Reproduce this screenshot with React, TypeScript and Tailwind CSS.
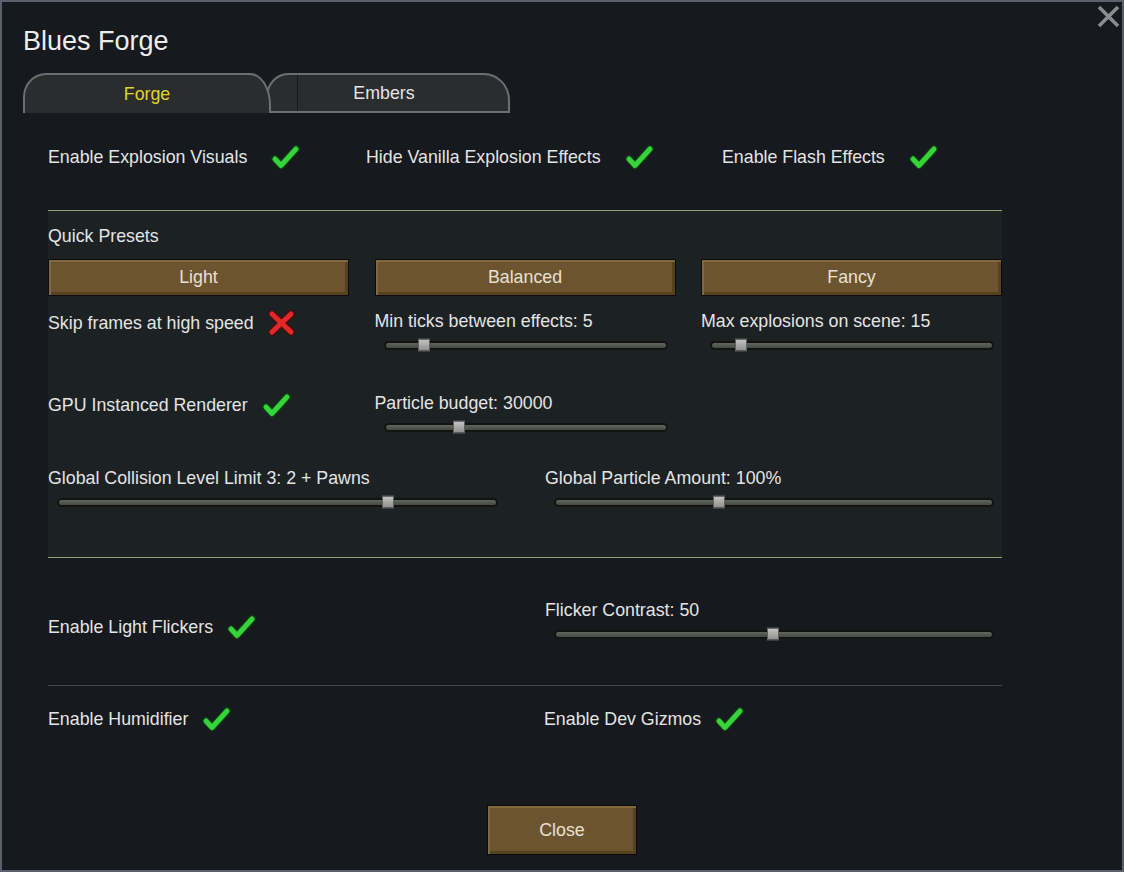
import React from "react";

// Green check mark used for enabled toggles
function CheckMark() {
  return (
    <svg width="29" height="25" viewBox="0 0 29 25" className="shrink-0">
      <path d="M4 14 L10 20.5 L25 4" fill="none" stroke="#0f3f12" strokeWidth="7.4" strokeLinecap="round" strokeLinejoin="round" />
      <path d="M4 14 L10 20.5 L25 4" fill="none" stroke="#35d43a" strokeWidth="5" strokeLinecap="round" strokeLinejoin="round" />
    </svg>
  );
}

// Red cross used for disabled toggles
function CrossMark() {
  return (
    <svg width="27" height="26" viewBox="0 0 27 26" className="shrink-0">
      <path d="M4 4 L23 22 M23 4 L4 22" fill="none" stroke="#4a0d0d" strokeWidth="7.4" strokeLinecap="round" />
      <path d="M4 4 L23 22 M23 4 L4 22" fill="none" stroke="#e4282a" strokeWidth="5" strokeLinecap="round" />
    </svg>
  );
}

function Toggle({ label, on, gap = "gap-[14px]" }: { label: string; on: boolean; gap?: string }) {
  return (
    <div className={`flex items-center h-[28px] ${gap}`}>
      <span className="leading-6 whitespace-nowrap">{label}</span>
      {on ? <CheckMark /> : <CrossMark />}
    </div>
  );
}

function Slider({ label, pct }: { label: string; pct: number }) {
  return (
    <div className="flex flex-col">
      <div className="h-6 leading-6 whitespace-nowrap">{label}</div>
      <div className="h-6 pl-[9px] pr-[8px] flex items-center">
        <div className="relative w-full h-[9px] rounded-full border-2 border-[#121412] bg-gradient-to-b from-[#63665f] to-[#464942]">
          <div
            className="absolute top-1/2 -translate-y-1/2 w-[12px] h-[13px] border border-[#5e5e5e] bg-gradient-to-b from-[#c4c4c4] to-[#8f8f8f]"
            style={{ left: `calc(${pct}% - 6px)` }}
          />
        </div>
      </div>
    </div>
  );
}

function WoodButton({ label, className = "" }: { label: string; className?: string }) {
  return (
    <div
      className={`flex items-center justify-center border border-[#0b0b0b] bg-[#6c5431] text-[#e8e1d1] shadow-[inset_2px_2px_0_#806840,inset_-3px_-3px_0_#56421f] ${className}`}
    >
      {label}
    </div>
  );
}

export default function App() {
  return (
    <div className="w-[1124px] h-[872px] overflow-hidden relative bg-[#16191e] border-2 border-[#5a616c] text-[#e4e4e4] text-[17.8px] font-['Liberation_Sans',Arial,sans-serif]">
      {/* window close */}
      <div className="absolute right-[2px] top-[3px]">
        <svg width="23" height="23" viewBox="0 0 23 23">
          <path d="M2 2 L21 21 M21 2 L2 21" stroke="#8b8c8e" strokeWidth="3.6" />
        </svg>
      </div>

      <div className="pl-[21px] pt-[24px] text-[27px] leading-[30px] text-[#ececec]">Blues Forge</div>

      {/* tabs */}
      <div className="flex mt-[17px] ml-[21px] h-[39px]">
        <div className="relative z-10 w-[248px] h-[40px] bg-[#2b2c2e] border-2 border-b-0 border-[#6d6e70] rounded-tl-[23px_24px] rounded-tr-[21px_32px] flex items-center justify-center text-[#e0d42a]">
          Forge
        </div>
        <div className="relative -ml-[5px] w-[244px] h-[40px] bg-[#2b2c2e] border-2 border-[#6d6e70] rounded-tl-[22px_24px] rounded-tr-[26px_27px] flex items-center justify-center pr-[8px]">
          <div className="absolute left-[29px] top-0 bottom-0 w-px bg-[#18191a]" />
          Embers
        </div>
      </div>

      <div className="ml-[46px] w-[954px]">
        {/* master toggles */}
        <div className="mt-[31px] grid grid-cols-[318px_356px_1fr] items-center">
          <Toggle label="Enable Explosion Visuals" on gap="gap-[24px]" />
          <Toggle label="Hide Vanilla Explosion Effects" on gap="gap-[24px]" />
          <Toggle label="Enable Flash Effects" on gap="gap-[24px]" />
        </div>

        {/* quick presets block */}
        <div className="mt-[39px] border-y border-[#8fa27a] bg-[#1c2123] pt-[13px] pb-[43px]">
          <div className="h-6 leading-6">Quick Presets</div>
          <div className="mt-[11px] grid grid-cols-3 gap-x-[25.5px]">
            <WoodButton label="Light" className="h-[37px]" />
            <WoodButton label="Balanced" className="h-[37px]" />
            <WoodButton label="Fancy" className="h-[37px]" />
          </div>

          <div className="mt-[13px] grid grid-cols-3 gap-x-[25.5px] items-start">
            <Toggle label="Skip frames at high speed" on={false} />
            <Slider label="Min ticks between effects: 5" pct={13.6} />
            <Slider label="Max explosions on scene: 15" pct={10.2} />
          </div>

          <div className="mt-[34px] grid grid-cols-3 gap-x-[25.5px] items-start">
            <Toggle label="GPU Instanced Renderer" on />
            <Slider label="Particle budget: 30000" pct={26.2} />
            <div />
          </div>

          <div className="mt-[27px] grid grid-cols-[458px_457px] gap-x-[39px]">
            <Slider label="Global Collision Level Limit 3: 2 + Pawns" pct={75.2} />
            <Slider label="Global Particle Amount: 100%" pct={37.4} />
          </div>
        </div>

        {/* flickers */}
        <div className="mt-[40px] grid grid-cols-[458px_457px] gap-x-[39px] items-start">
          <div className="mt-[15px]">
            <Toggle label="Enable Light Flickers" on />
          </div>
          <Slider label="Flicker Contrast: 50" pct={49.8} />
        </div>

        <div className="mt-[39px] h-px bg-[#44474c]" />

        <div className="mt-[19px] grid grid-cols-[457px_1fr] gap-x-[39px]">
          <Toggle label="Enable Humidifier" on />
          <Toggle label="Enable Dev Gizmos" on />
        </div>
      </div>

      <div className="mt-[72px] flex justify-center">
        <WoodButton label="Close" className="w-[150px] h-[50px]" />
      </div>
    </div>
  );
}
